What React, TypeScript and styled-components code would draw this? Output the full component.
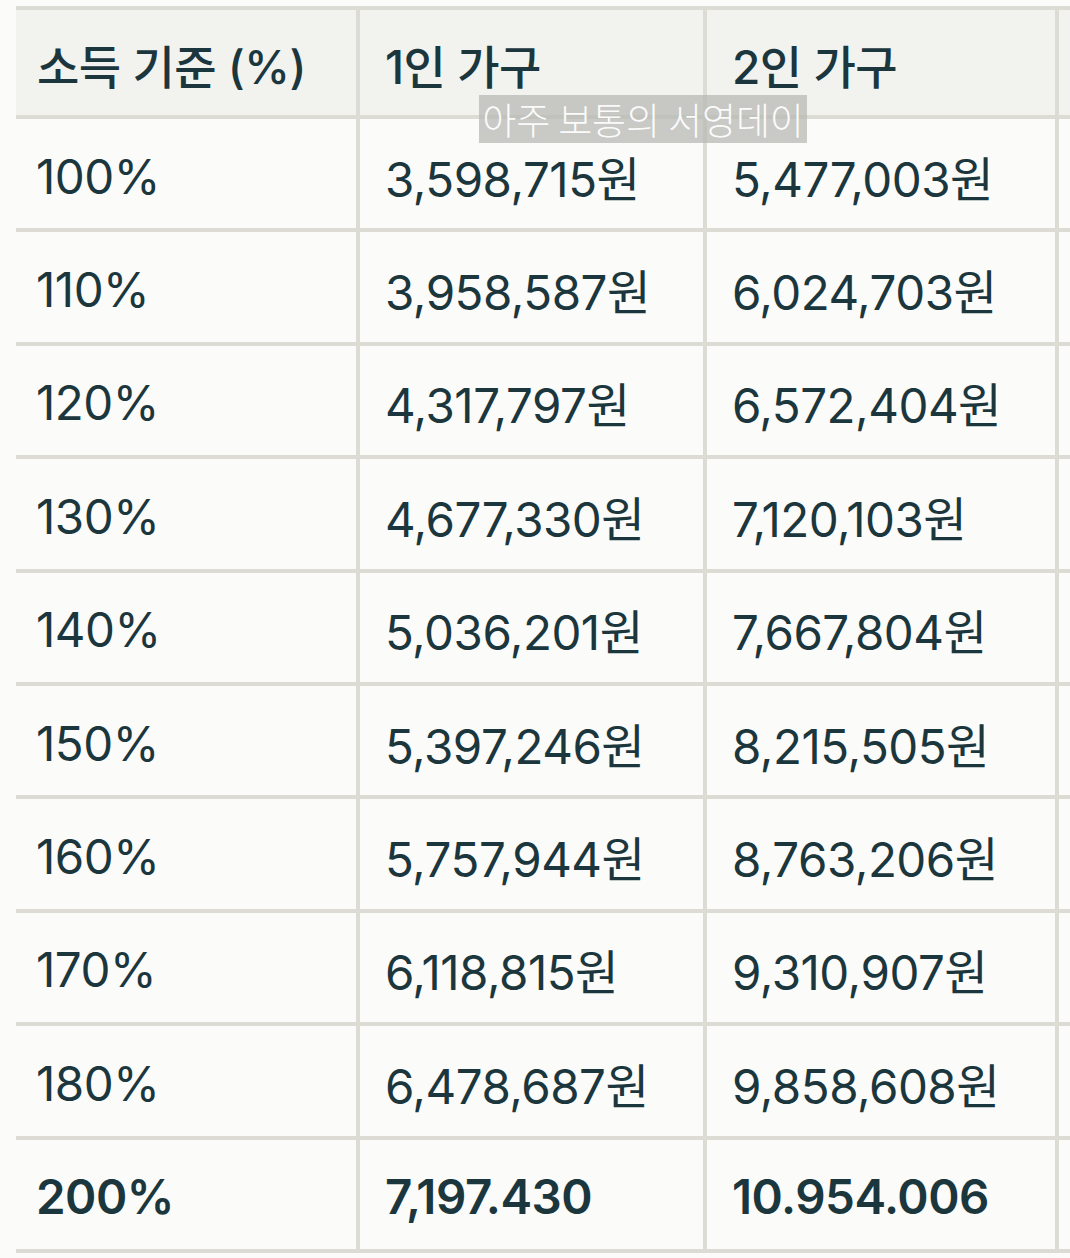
import React from "react";
import styled, { createGlobalStyle } from "styled-components";

const Global = createGlobalStyle`
  html, body {
    margin: 0;
    padding: 0;
    background: #fbfbf9;
    overflow: hidden;
  }
  body {
    font-family: Inter, "Noto Sans CJK KR", sans-serif;
    color: #1b373d;
  }
`;

const Page = styled.div`
  width: 1070px;
  height: 1258px;
  overflow: hidden;
  padding: 6px 0 0 16px;
  box-sizing: border-box;
`;

const Frame = styled.div`
  position: relative;
  width: max-content;
`;

const Table = styled.table`
  border-collapse: collapse;
  table-layout: fixed;
  font-family: Inter, "Noto Sans CJK KR", sans-serif;
  font-size: 47.5px;
  letter-spacing: -0.5px;
  color: #1b373d;
`;

const Col = styled.col<{ $w: number }>`
  width: ${(p) => p.$w}px;
`;

const HeadRow = styled.tr`
  height: 109px;
  background: #f2f2ef;
`;

const BodyRow = styled.tr`
  height: 113.4px;
  background: #fbfbf9;
`;

const HeadCell = styled.th`
  border: 4px solid #dcdbd4;
  padding: 2px 0 0 25px;
  text-align: left;
  font-weight: 500;
  font-size: 46px;
  white-space: nowrap;
  overflow: hidden;
  &:first-child {
    border-left: none;
    padding-left: 21px;
  }
`;

const Cell = styled.td<{ $strong?: boolean }>`
  border: 4px solid #dcdbd4;
  padding: 5px 0 0 25px;
  text-align: left;
  font-weight: ${(p) => (p.$strong ? 600 : 400)};
  white-space: nowrap;
  overflow: hidden;
  &:first-child {
    border-left: none;
    padding-left: 20px;
  }
`;

const Watermark = styled.div`
  position: absolute;
  left: 463px;
  top: 89px;
  width: 328px;
  height: 48px;
  background: rgba(185, 185, 182, 0.76);
  display: flex;
  align-items: center;
  justify-content: center;
  font-family: "Noto Sans CJK KR", sans-serif;
  font-weight: 300;
  font-size: 37px;
  letter-spacing: -0.1px;
  color: rgba(255, 255, 255, 0.95);
  white-space: nowrap;
  pointer-events: none;
`;

type Row = { pct: string; one: string; two: string; strong?: boolean };

const rows: Row[] = [
  { pct: "100%", one: "3,598,715원", two: "5,477,003원" },
  { pct: "110%", one: "3,958,587원", two: "6,024,703원" },
  { pct: "120%", one: "4,317,797원", two: "6,572,404원" },
  { pct: "130%", one: "4,677,330원", two: "7,120,103원" },
  { pct: "140%", one: "5,036,201원", two: "7,667,804원" },
  { pct: "150%", one: "5,397,246원", two: "8,215,505원" },
  { pct: "160%", one: "5,757,944원", two: "8,763,206원" },
  { pct: "170%", one: "6,118,815원", two: "9,310,907원" },
  { pct: "180%", one: "6,478,687원", two: "9,858,608원" },
  { pct: "200%", one: "7,197.430", two: "10.954.006", strong: true },
];

export default function App() {
  return (
    <>
      <Global />
      <Page>
        <Frame>
          <Table>
            <colgroup>
              <Col $w={342} />
              <Col $w={347} />
              <Col $w={352} />
              <Col $w={340} />
            </colgroup>
            <thead>
              <HeadRow>
                <HeadCell>소득 기준 (%)</HeadCell>
                <HeadCell>1인 가구</HeadCell>
                <HeadCell>2인 가구</HeadCell>
                <HeadCell></HeadCell>
              </HeadRow>
            </thead>
            <tbody>
              {rows.map((r) => (
                <BodyRow key={r.pct}>
                  <Cell $strong={r.strong}>{r.pct}</Cell>
                  <Cell $strong={r.strong}>{r.one}</Cell>
                  <Cell $strong={r.strong}>{r.two}</Cell>
                  <Cell $strong={r.strong}></Cell>
                </BodyRow>
              ))}
            </tbody>
          </Table>
          <Watermark>아주 보통의 서영데이</Watermark>
        </Frame>
      </Page>
    </>
  );
}
